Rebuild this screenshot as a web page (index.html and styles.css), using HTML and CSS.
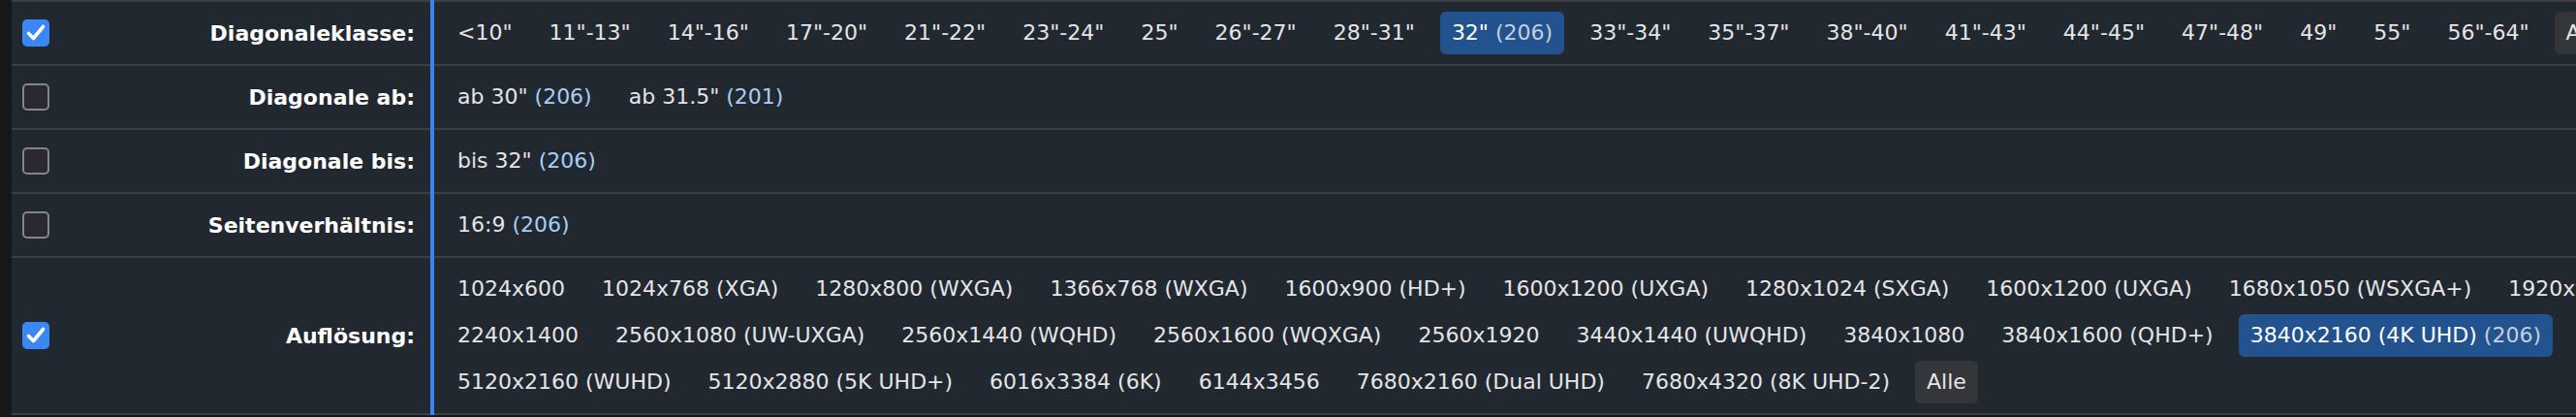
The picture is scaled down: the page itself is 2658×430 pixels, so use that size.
FILE: index.html
```html
<!DOCTYPE html>
<html lang="de">
<head>
<meta charset="utf-8">
<title>Filter</title>
<link rel="stylesheet" href="styles.css">
</head>
<body>
<div class="page">
  <div class="filters">
    <div class="row">
      <div class="head">
        <span class="cb checked"><svg viewBox="0 0 28 28" width="28" height="28"><path d="M6.5 14.5 L11.5 19.5 L21.5 7.5" fill="none" stroke="#fff" stroke-width="3.6" stroke-linecap="round" stroke-linejoin="round"/></svg></span>
        <span class="label">Diagonaleklasse:</span>
      </div>
      <div class="divider"></div>
      <div class="opts">
        <a class="opt">&lt;10"</a>
        <a class="opt">11"-13"</a>
        <a class="opt">14"-16"</a>
        <a class="opt">17"-20"</a>
        <a class="opt">21"-22"</a>
        <a class="opt">23"-24"</a>
        <a class="opt">25"</a>
        <a class="opt">26"-27"</a>
        <a class="opt">28"-31"</a>
        <a class="opt sel">32" <span class="cnt">(206)</span></a>
        <a class="opt">33"-34"</a>
        <a class="opt">35"-37"</a>
        <a class="opt">38"-40"</a>
        <a class="opt">41"-43"</a>
        <a class="opt">44"-45"</a>
        <a class="opt">47"-48"</a>
        <a class="opt">49"</a>
        <a class="opt">55"</a>
        <a class="opt">56"-64"</a>
        <a class="opt all">Alle</a>
      </div>
    </div>
    <div class="row">
      <div class="head">
        <span class="cb"></span>
        <span class="label">Diagonale ab:</span>
      </div>
      <div class="divider"></div>
      <div class="opts">
        <a class="opt">ab 30" <span class="cnt">(206)</span></a>
        <a class="opt">ab 31.5" <span class="cnt">(201)</span></a>
      </div>
    </div>
    <div class="row">
      <div class="head">
        <span class="cb"></span>
        <span class="label">Diagonale bis:</span>
      </div>
      <div class="divider"></div>
      <div class="opts">
        <a class="opt">bis 32" <span class="cnt">(206)</span></a>
      </div>
    </div>
    <div class="row">
      <div class="head">
        <span class="cb"></span>
        <span class="label">Seitenverhältnis:</span>
      </div>
      <div class="divider"></div>
      <div class="opts">
        <a class="opt">16:9 <span class="cnt">(206)</span></a>
      </div>
    </div>
    <div class="row last">
      <div class="head">
        <span class="cb checked"><svg viewBox="0 0 28 28" width="28" height="28"><path d="M6.5 14.5 L11.5 19.5 L21.5 7.5" fill="none" stroke="#fff" stroke-width="3.6" stroke-linecap="round" stroke-linejoin="round"/></svg></span>
        <span class="label">Auflösung:</span>
      </div>
      <div class="divider"></div>
      <div class="opts">
        <a class="opt">1024x600</a>
        <a class="opt">1024x768 (XGA)</a>
        <a class="opt">1280x800 (WXGA)</a>
        <a class="opt">1366x768 (WXGA)</a>
        <a class="opt">1600x900 (HD+)</a>
        <a class="opt">1600x1200 (UXGA)</a>
        <a class="opt">1280x1024 (SXGA)</a>
        <a class="opt">1600x1200 (UXGA)</a>
        <a class="opt">1680x1050 (WSXGA+)</a>
        <a class="opt">1920x1080 (FHD)</a>
        <a class="opt">2240x1400</a>
        <a class="opt">2560x1080 (UW-UXGA)</a>
        <a class="opt">2560x1440 (WQHD)</a>
        <a class="opt">2560x1600 (WQXGA)</a>
        <a class="opt">2560x1920</a>
        <a class="opt">3440x1440 (UWQHD)</a>
        <a class="opt">3840x1080</a>
        <a class="opt">3840x1600 (QHD+)</a>
        <a class="opt sel">3840x2160 (4K UHD) <span class="cnt">(206)</span></a>
        <a class="opt">5120x2160 (WUHD)</a>
        <a class="opt">5120x2880 (5K UHD+)</a>
        <a class="opt">6016x3384 (6K)</a>
        <a class="opt">6144x3456</a>
        <a class="opt">7680x2160 (Dual UHD)</a>
        <a class="opt">7680x4320 (8K UHD-2)</a>
        <a class="opt all">Alle</a>
      </div>
    </div>
  </div>
</div>
</body>
</html>
```

FILE: styles.css
```css
html, body {
  margin: 0;
  padding: 0;
  background: #16181c;
  overflow: hidden;
}

.page {
  width: 2658px;
  height: 430px;
  overflow: hidden;
  padding-left: 12px;
  box-sizing: border-box;
  font-family: "DejaVu Sans", Verdana, sans-serif;
  font-size: 22px;
}

.filters {
  width: 2850px;
  background: #222830;
}

.row {
  display: grid;
  grid-template-columns: 432px 4px 1fr;
}

.head,
.opts {
  border-top: 2px solid #3d3e41;
}

.row.last .head,
.row.last .opts {
  border-bottom: 2px solid #3d3e41;
}

.head {
  display: flex;
  align-items: center;
  padding: 0 16px 0 11px;
}

.label {
  flex: 1;
  text-align: right;
  font-weight: bold;
  color: #ffffff;
  white-space: nowrap;
}

.cb {
  width: 28px;
  height: 28px;
  box-sizing: border-box;
  border-radius: 5px;
  border: 2px solid #85858f;
  background: #2a2830;
  display: flex;
  align-items: center;
  justify-content: center;
  flex: none;
}

.cb.checked {
  border: none;
  background: #3b87f5;
}

.cb svg {
  display: block;
}

.divider {
  background: #3b84f2;
}

.opts {
  display: flex;
  flex-wrap: wrap;
  align-content: center;
  gap: 4px 14px;
  padding: 10px 12px;
}

.opt {
  display: block;
  padding: 6px 12px;
  line-height: 32px;
  border-radius: 6px;
  color: #e4e5e7;
  white-space: nowrap;
  text-decoration: none;
}

.cnt {
  color: #a6cff5;
}

.opt.sel {
  background: #23538e;
  color: #ffffff;
}

.opt.sel .cnt {
  color: #c6cfda;
}

.opt.all {
  background: #34363a;
}
```
